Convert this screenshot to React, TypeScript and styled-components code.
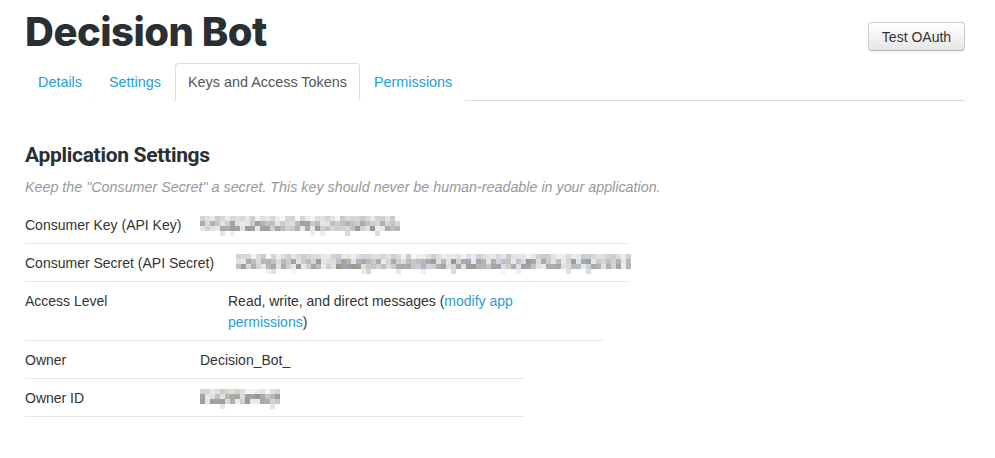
import React from "react";
import styled, { createGlobalStyle } from "styled-components";

const Global = createGlobalStyle`
  html, body { margin: 0; padding: 0; background: #fff; }
  body {
    font-family: "Liberation Sans", Arial, sans-serif;
    font-size: 14px;
    line-height: 20px;
    color: #333;
  }
`;

const Page = styled.div`
  width: 940px;
  padding: 0 25px;
`;

const Header = styled.div`
  display: flex;
  justify-content: space-between;
  align-items: flex-start;
`;

const Title = styled.h1`
  margin: 10px 0 0;
  font-family: Inter, "Liberation Sans", sans-serif;
  font-weight: 800;
  font-size: 40px;
  line-height: 44px;
  letter-spacing: -0.5px;
  color: #292f33;
`;

const Button = styled.button`
  margin-top: 22px;
  padding: 4px 12px 3px;
  font-family: "Liberation Sans", Arial, sans-serif;
  font-size: 14px;
  line-height: 20px;
  color: #333;
  background: linear-gradient(#ffffff, #e6e6e6);
  border: 1px solid #ccc;
  border-bottom-color: #b3b3b3;
  border-radius: 4px;
  box-shadow: inset 0 1px 0 rgba(255, 255, 255, 0.2), 0 1px 2px rgba(0, 0, 0, 0.05);
  width: 97px;
`;

const Tabs = styled.ul`
  display: flex;
  list-style: none;
  margin: 9px 0 0;
  padding: 0;
  border-bottom: 1px solid #ddd;
`;

const Tab = styled.li<{ $active?: boolean }>`
  margin-right: 1px;
  margin-bottom: -1px;
  padding: 8px 12px;
  font-size: 14.4px;
  line-height: 20px;
  border: 1px solid ${(p) => (p.$active ? "#ddd" : "transparent")};
  border-bottom-color: ${(p) => (p.$active ? "#fff" : "transparent")};
  border-radius: 4px 4px 0 0;
  background: #fff;
  color: ${(p) => (p.$active ? "#555" : "#2a9dd4")};
`;

const Section = styled.div`
  margin-top: 41px;
`;

const SectionTitle = styled.h2`
  margin: 0;
  font-family: Roboto, "Liberation Sans", sans-serif;
  font-weight: 700;
  font-size: 21px;
  line-height: 26px;
  letter-spacing: -0.3px;
  color: #292f33;
`;

const Note = styled.p`
  margin: 9px 0 0;
  font-style: italic;
  font-size: 14.3px;
  color: #999;
`;

const Rows = styled.div`
  margin-top: 9px;
`;

const Row = styled.div<{ $width: number }>`
  display: flex;
  width: ${(p) => p.$width}px;
  padding: 9px 0 7px;
  line-height: 21px;
  border-bottom: 1px solid #e8e8e8;
`;

const Label = styled.div<{ $w: number }>`
  flex: none;
  width: ${(p) => p.$w}px;
`;

const Value = styled.div<{ $max?: number }>`
  flex: 1;
  display: flex;
  align-items: flex-start;
  max-width: ${(p) => (p.$max ? `${p.$max}px` : "none")};
`;

const Link = styled.a`
  color: #2a9dd4;
  text-decoration: none;
`;

function rng(seed: number) {
  let s = seed >>> 0;
  return () => {
    s = (s * 1664525 + 1013904223) >>> 0;
    return s / 4294967296;
  };
}

const Blob: React.FC<{ cols: number; seed: number; top?: number }> = ({ cols, seed, top = 1 }) => {
  const r = rng(seed);
  const cells: React.ReactNode[] = [];
  const rows = 4;
  for (let y = 0; y < rows; y++) {
    for (let x = 0; x < cols; x++) {
      let v: number;
      let show = true;
      if (y === 0) {
        v = 200 + r() * 45;
      } else if (y === 3) {
        show = r() < 0.18;
        v = 215 + r() * 25;
      } else {
        v = 150 + r() * 85;
      }
      if (!show) continue;
      const t = r();
      let rr = v, gg = v, bb = v;
      if (t < 0.12) { bb = Math.min(255, v + 18); gg = Math.min(255, v + 6); }
      else if (t < 0.22) { rr = Math.min(255, v + 14); gg = Math.min(255, v + 8); }
      cells.push(
        <rect
          key={`${x}-${y}`}
          x={x * 5}
          y={y * 5}
          width={5}
          height={5}
          fill={`rgb(${Math.round(rr)},${Math.round(gg)},${Math.round(bb)})`}
        />
      );
    }
  }
  return (
    <svg width={cols * 5} height={20} style={{ marginTop: top, display: "block" }} shapeRendering="crispEdges">
      {cells}
    </svg>
  );
};

export default function App() {
  return (
    <>
      <Global />
      <Page>
        <Header>
          <Title>Decision Bot</Title>
          <Button>Test OAuth</Button>
        </Header>
        <Tabs>
          <Tab>Details</Tab>
          <Tab>Settings</Tab>
          <Tab $active>Keys and Access Tokens</Tab>
          <Tab>Permissions</Tab>
        </Tabs>
        <Section>
          <SectionTitle>Application Settings</SectionTitle>
          <Note>Keep the "Consumer Secret" a secret. This key should never be human-readable in your application.</Note>
          <Rows>
            <Row $width={603}>
              <Label $w={175}>Consumer Key (API Key)</Label>
              <Value><Blob cols={40} seed={11} /></Value>
            </Row>
            <Row $width={603}>
              <Label $w={211}>Consumer Secret (API Secret)</Label>
              <Value><Blob cols={79} seed={27} /></Value>
            </Row>
            <Row $width={578}>
              <Label $w={203}>Access Level</Label>
              <Value $max={300}>
                <span>
                  Read, write, and direct messages (<Link>modify app permissions</Link>)
                </span>
              </Value>
            </Row>
            <Row $width={500}>
              <Label $w={175}>Owner</Label>
              <Value>Decision_Bot_</Value>
            </Row>
            <Row $width={500}>
              <Label $w={175}>Owner ID</Label>
              <Value><Blob cols={16} seed={5} /></Value>
            </Row>
          </Rows>
        </Section>
      </Page>
    </>
  );
}
